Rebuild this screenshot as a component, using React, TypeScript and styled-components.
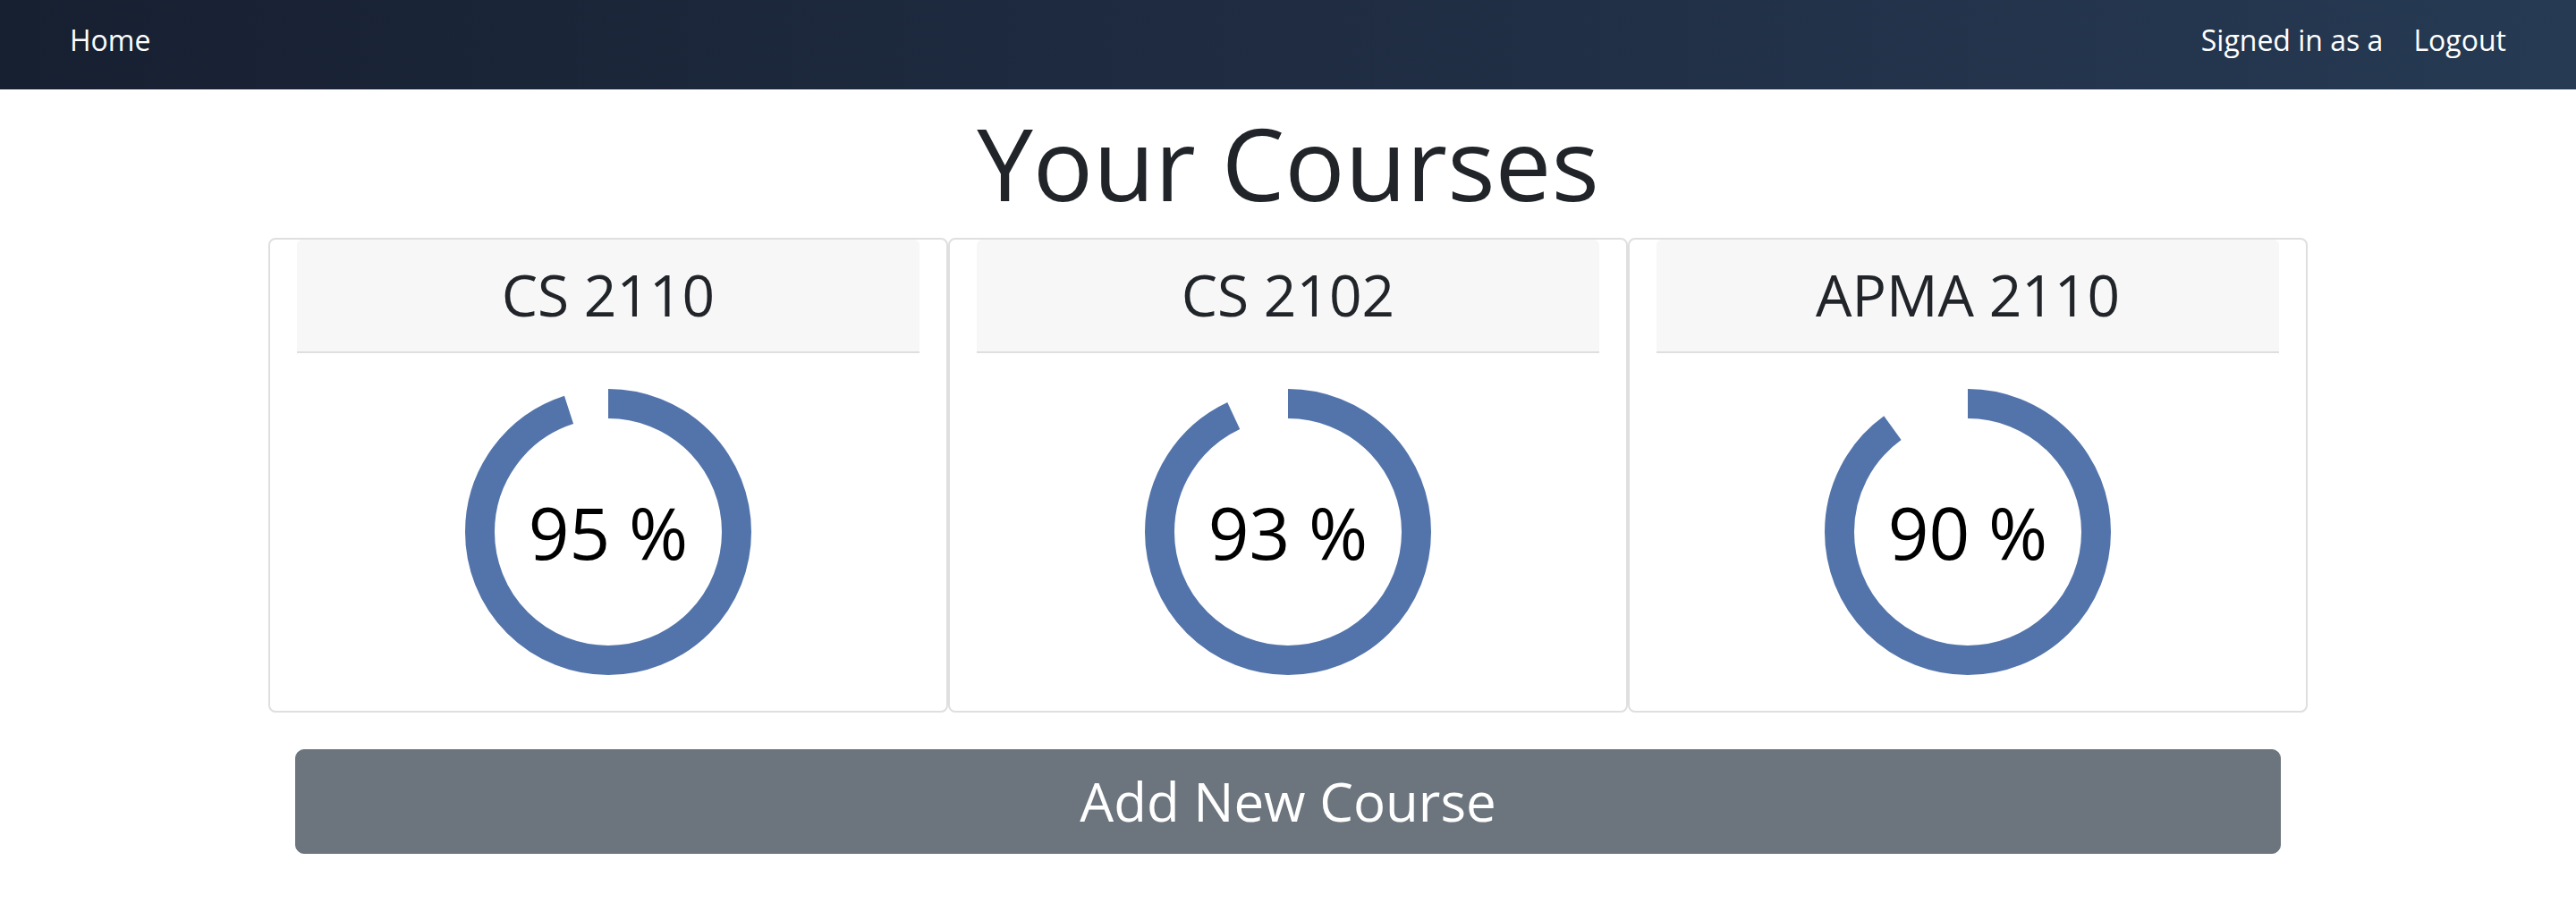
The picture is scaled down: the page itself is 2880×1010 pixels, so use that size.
import React from "react";
import styled, { createGlobalStyle } from "styled-components";

const GlobalStyle = createGlobalStyle`
  html, body {
    margin: 0;
    padding: 0;
    background: #ffffff;
    font-family: "Open Sans", "Liberation Sans", sans-serif;
    color: #212529;
  }
  * { box-sizing: border-box; }
`;

const NavBar = styled.nav`
  display: flex;
  justify-content: space-between;
  align-items: center;
  height: 100px;
  padding: 0 78px 10px 78px;
  background: linear-gradient(90deg, #172031 0%, #1f2c42 50%, #263a53 100%);
`;

const NavGroup = styled.div`
  display: flex;
  align-items: center;
  gap: 34px;
`;

const NavLink = styled.a`
  color: #ffffff;
  font-size: 32px;
  line-height: 1.5;
  text-decoration: none;
  cursor: pointer;
`;

const NavText = styled.span`
  color: #ffffff;
  font-size: 32px;
  line-height: 1.5;
`;

const Container = styled.main`
  width: 2280px;
  margin: 0 auto;
`;

const Title = styled.h1`
  margin: 15px 0 17px;
  text-align: center;
  font-size: 112px;
  font-weight: 400;
  line-height: 1.2;
  color: #212529;
`;

const CardRow = styled.div`
  display: grid;
  grid-template-columns: repeat(3, 1fr);
`;

const Card = styled.section`
  display: flex;
  flex-direction: column;
  border: 2px solid #dfdfdf;
  border-radius: 8px;
  background: #ffffff;
`;

const CardHeader = styled.header`
  margin: 0 30px;
  padding: 24px 40px;
  background: #f7f7f7;
  border-bottom: 2px solid #dfdfdf;
  border-radius: 6px 6px 0 0;
  text-align: center;
`;

const CourseName = styled.h2`
  margin: 0;
  font-size: 64px;
  font-weight: 400;
  line-height: 1.2;
  color: #212529;
`;

const CardBody = styled.div`
  display: flex;
  justify-content: center;
  padding: 40px;
`;

const AddButton = styled.button`
  display: block;
  width: calc(100% - 60px);
  margin: 41px 30px 0;
  padding: 15px 32px;
  border: 1px solid #6c757d;
  border-radius: 10px;
  background: #6c757d;
  color: #ffffff;
  font-family: "Open Sans", "Liberation Sans", sans-serif;
  font-size: 60px;
  line-height: 85px;
  font-weight: 400;
  cursor: pointer;
`;

const SIZE = 320;
const STROKE = 33;
const R = (SIZE - STROKE) / 2;
const CIRC = 2 * Math.PI * R;

function ProgressRing({ value }: { value: number }) {
  const filled = (value / 100) * CIRC;
  return (
    <svg width={SIZE} height={SIZE} viewBox={`0 0 ${SIZE} ${SIZE}`}>
      <circle
        cx={SIZE / 2}
        cy={SIZE / 2}
        r={R}
        fill="none"
        stroke="#5374ab"
        strokeWidth={STROKE}
        strokeLinecap="butt"
        strokeDasharray={`${filled} ${CIRC}`}
        transform={`rotate(-90 ${SIZE / 2} ${SIZE / 2})`}
      />
      <text
        x={SIZE / 2}
        y={191}
        textAnchor="middle"
        fontFamily='"Open Sans", "Liberation Sans", sans-serif'
        fontSize={80}
        fill="#000000"
      >
        {value} %
      </text>
    </svg>
  );
}

const courses = [
  { name: "CS 2110", grade: 95 },
  { name: "CS 2102", grade: 93 },
  { name: "APMA 2110", grade: 90 },
];

export default function App() {
  return (
    <>
      <GlobalStyle />
      <NavBar>
        <NavGroup>
          <NavLink>Home</NavLink>
        </NavGroup>
        <NavGroup>
          <NavText>Signed in as a</NavText>
          <NavLink>Logout</NavLink>
        </NavGroup>
      </NavBar>
      <Container>
        <Title>Your Courses</Title>
        <CardRow>
          {courses.map((c) => (
            <Card key={c.name}>
              <CardHeader>
                <CourseName>{c.name}</CourseName>
              </CardHeader>
              <CardBody>
                <ProgressRing value={c.grade} />
              </CardBody>
            </Card>
          ))}
        </CardRow>
        <AddButton>Add New Course</AddButton>
      </Container>
    </>
  );
}
